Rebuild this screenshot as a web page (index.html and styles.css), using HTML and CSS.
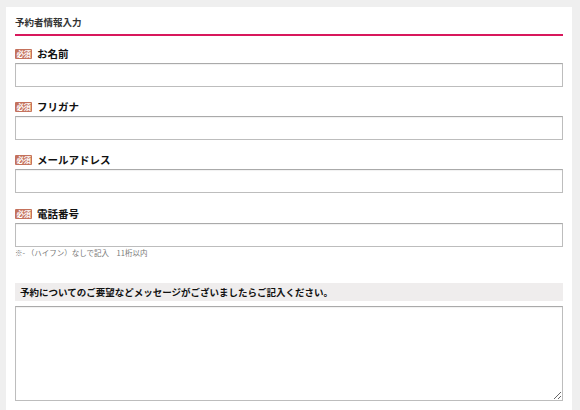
FILE: index.html
```html
<!DOCTYPE html>
<html lang="ja">
<head>
<meta charset="utf-8">
<title>予約者情報入力</title>
<link rel="stylesheet" href="styles.css">
</head>
<body>
<div class="panel">
  <h2 class="title">予約者情報入力</h2>
  <div class="field first">
    <div class="label-row"><span class="badge">必須</span><span class="label">お名前</span></div>
    <input class="input" type="text">
  </div>
  <div class="field">
    <div class="label-row"><span class="badge">必須</span><span class="label">フリガナ</span></div>
    <input class="input" type="text">
  </div>
  <div class="field">
    <div class="label-row"><span class="badge">必須</span><span class="label">メールアドレス</span></div>
    <input class="input" type="text">
  </div>
  <div class="field last">
    <div class="label-row"><span class="badge">必須</span><span class="label">電話番号</span></div>
    <input class="input" type="text">
    <p class="note">※- （ハイフン）なしで記入　11桁以内</p>
  </div>
  <div class="message">
    <h3 class="msg-head">予約についてのご要望などメッセージがございましたらご記入ください。</h3>
    <textarea class="textarea"></textarea>
  </div>
</div>
</body>
</html>
```
FILE: styles.css
```css
html, body {
  margin: 0;
  padding: 0;
  background: #efefef;
  font-family: "Noto Sans CJK JP", "Noto Sans", sans-serif;
  color: #222;
}
.panel {
  margin: 7px 8px 0 6px;
  background: #fff;
  padding: 0 9px 20px;
  min-height: 420px;
  box-sizing: border-box;
}
.title {
  margin: 0;
  padding: 8px 0 5px;
  font-size: 9.5px;
  line-height: 14px;
  font-weight: bold;
  color: #333;
  border-bottom: 2px solid #d8185c;
}
.field {
  margin-top: 14px;
}
.field.first {
  margin-top: 12px;
}
.field.last {
  margin-top: 15px;
}
.label-row {
  display: flex;
  align-items: center;
  gap: 5px;
  height: 12px;
  margin-bottom: 3px;
}
.badge {
  display: inline-flex;
  align-items: center;
  justify-content: center;
  width: 17px;
  height: 10px;
  background: #c4715b;
  color: #fff;
  font-size: 7.5px;
  font-weight: bold;
  line-height: 10px;
  border-radius: 1px;
  letter-spacing: -0.5px;
}
.label {
  font-size: 10.5px;
  font-weight: bold;
  color: #111;
  line-height: 12px;
}
.input {
  display: block;
  width: 100%;
  height: 24px;
  box-sizing: border-box;
  border: 1px solid #bdbdbd;
  border-top-color: #aaa;
  box-shadow: inset 0 1px 1px rgba(0,0,0,0.06);
  background: #fff;
  margin: 0;
  padding: 0 4px;
}
.note {
  margin: 1px 0 0;
  font-size: 7.5px;
  line-height: 10px;
  color: #777;
}
.message {
  margin-top: 25px;
}
.msg-head {
  margin: 0;
  background: #efeded;
  height: 18px;
  padding: 0 5px;
  font-size: 9.5px;
  line-height: 18px;
  font-weight: bold;
  color: #111;
}
.textarea {
  display: block;
  width: 100%;
  height: 95px;
  box-sizing: border-box;
  margin: 5px 0 0;
  border: 1px solid #bdbdbd;
  border-top-color: #aaa;
  box-shadow: inset 0 1px 1px rgba(0,0,0,0.06);
  background: #fff;
  resize: both;
}
```
